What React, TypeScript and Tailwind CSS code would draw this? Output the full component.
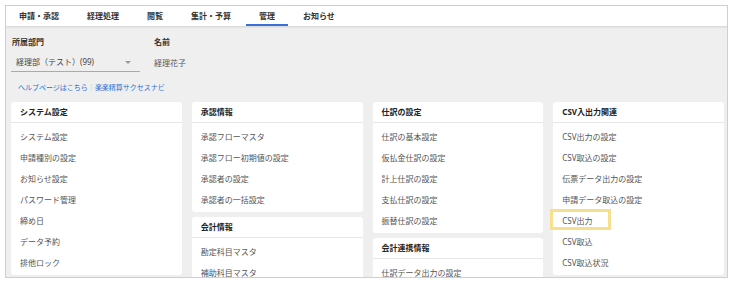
const tabs = ['申請・承認', '経理処理', '閲覧', '集計・予算', '管理', 'お知らせ'];

type Card = { title: string; items: string[] };

const columns: Card[][] = [
  [
    {
      title: 'システム設定',
      items: ['システム設定', '申請種別の設定', 'お知らせ設定', 'パスワード管理', '締め日', 'データ予約', '排他ロック'],
    },
  ],
  [
    { title: '承認情報', items: ['承認フローマスタ', '承認フロー初期値の設定', '承認者の設定', '承認者の一括設定'] },
    { title: '会計情報', items: ['勘定科目マスタ', '補助科目マスタ'] },
  ],
  [
    { title: '仕訳の設定', items: ['仕訳の基本設定', '仮払金仕訳の設定', '計上仕訳の設定', '支払仕訳の設定', '振替仕訳の設定'] },
    { title: '会計連携情報', items: ['仕訳データ出力の設定'] },
  ],
  [
    {
      title: 'CSV入出力関連',
      items: ['CSV出力の設定', 'CSV取込の設定', '伝票データ出力の設定', '申請データ取込の設定', 'CSV出力', 'CSV取込', 'CSV取込状況'],
    },
  ],
];

const MenuCard = ({ card }: { card: Card }) => (
  <div className="bg-white rounded-[3px] shrink-0">
    <div className="h-[21px] flex items-center pl-[9px] border-b border-[#e6e6e6] text-[8px] font-bold text-[#222]">
      {card.title}
    </div>
    <div className="pt-[3px] pb-[2px]">
      {card.items.map((item) => (
        <div key={item} className="relative h-[21px] flex items-center pl-[9px] text-[8px] text-[#555]">
          {item === 'CSV出力' && (
            <span className="absolute left-[-3px] top-[-1px] w-[61px] h-[21px] border-[3px] border-[#f8df8c]" />
          )}
          <span className="relative">{item}</span>
        </div>
      ))}
    </div>
  </div>
);

export default function App() {
  return (
    <div className="w-[731px] h-[283px] bg-white pt-[5px] pl-[5px] font-['Noto_Sans','Noto_Sans_CJK_JP',sans-serif]">
      <div className="w-[723px] h-[273px] border border-[#cfcfcf] bg-[#efefef] overflow-hidden flex flex-col">
        {/* Tabs */}
        <div className="h-[20px] bg-white flex shrink-0 gap-[2px] shadow-[0_1px_2px_rgba(0,0,0,0.12)] relative z-10">
          {tabs.map((t) => (
            <div
              key={t}
              className={`px-[13px] h-full flex items-center text-[8px] font-bold text-[#333] ${
                t === '管理' ? 'border-b-2 border-[#3b6fd8] pt-[1px]' : 'pb-[1px]'
              }`}
            >
              {t}
            </div>
          ))}
        </div>

        {/* Department / name */}
        <div className="flex pl-[5px] pt-[10px] shrink-0">
          <div className="w-[143px]">
            <div className="text-[8px] font-bold text-[#333] leading-[12px] pl-[1px]">所属部門</div>
            <div className="mt-[7px] w-[129px] h-[17px] border-b border-[#aaa] flex items-center justify-between pl-[5px] pr-[9px] pb-[2px]">
              <span className="text-[8px] text-[#444]">経理部（テスト）(99)</span>
              <span className="w-0 h-0 border-x-[3px] border-x-transparent border-t-[3px] border-t-[#999]" />
            </div>
          </div>
          <div>
            <div className="text-[8px] font-bold text-[#333] leading-[12px]">名前</div>
            <div className="mt-[7px] h-[17px] flex items-center pb-[2px] text-[8px] text-[#555]">経理花子</div>
          </div>
        </div>

        <div className="pl-[12px] mt-[11px] text-[7px] leading-[10px] text-[#2b6fd3] shrink-0">
          ヘルプページはこちら<span className="text-[#9bb8e6]">｜</span>楽楽精算サクセスナビ
        </div>

        {/* Menu cards */}
        <div className="grid grid-cols-4 gap-x-[10px] pl-[5px] pr-[3px] mt-[9px]">
          {columns.map((col, i) => (
            <div key={i} className="flex flex-col gap-[5px]">
              {col.map((c) => (
                <MenuCard key={c.title} card={c} />
              ))}
            </div>
          ))}
        </div>
      </div>
    </div>
  );
}
